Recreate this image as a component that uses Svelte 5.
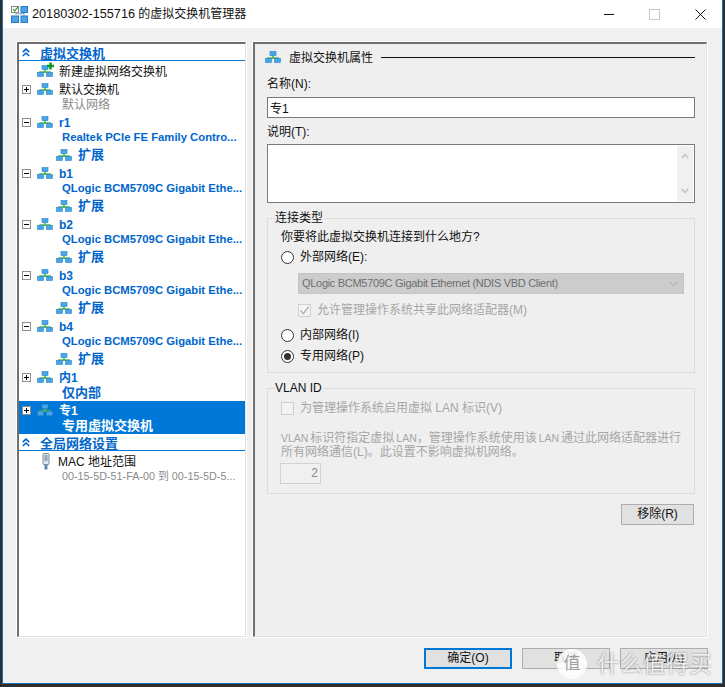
<script>
	const adapters = [
		{ name: 'r1', nic: 'Realtek PCIe FE Family Contro...' },
		{ name: 'b1', nic: 'QLogic BCM5709C Gigabit Ethe...' },
		{ name: 'b2', nic: 'QLogic BCM5709C Gigabit Ethe...' },
		{ name: 'b3', nic: 'QLogic BCM5709C Gigabit Ethe...' },
		{ name: 'b4', nic: 'QLogic BCM5709C Gigabit Ethe...' }
	];
</script>

{#snippet net(plus = false)}
	<svg class="net" width="16" height="12" viewBox="0 0 16 12">
		<path d="M8 4v4M3 8.5V7h10v1.5" fill="none" stroke="#4db84d" stroke-width="1.6" />
		<rect x="5" y="0.5" width="6" height="4" fill="#46a6ea" stroke="#2a80c8" stroke-width="0.6" />
		<rect x="0.5" y="7.5" width="6" height="4" fill="#46a6ea" stroke="#2a80c8" stroke-width="0.6" />
		<rect x="9.5" y="7.5" width="6" height="4" fill="#46a6ea" stroke="#2a80c8" stroke-width="0.6" />
		{#if plus}
			<path d="M13.5 -2.5v7M10 1h7" stroke="#0a9a1e" stroke-width="2.4" />
		{/if}
	</svg>
{/snippet}

{#snippet expander(minus = false)}
	<span class="exp">
		<svg width="9" height="9" viewBox="0 0 9 9">
			<rect x="0.5" y="0.5" width="8" height="8" fill="#fff" stroke="#8e8f8f" />
			<path d={minus ? 'M2 4.5h5' : 'M2 4.5h5M4.5 2v5'} stroke="#000" />
		</svg>
	</span>
{/snippet}

{#snippet chevrons()}
	<svg class="chev" width="8" height="9" viewBox="0 0 8 9">
		<path d="M0.8 4.2 4 1.2l3.2 3M0.8 8 4 5l3.2 3" fill="none" stroke="#0066cc" stroke-width="1.6" />
	</svg>
{/snippet}

<div class="desk">
	<div class="window">
		<header class="title">
			<svg width="17" height="17" viewBox="0 0 17 17">
				<rect x="0.5" y="0.5" width="7" height="6" fill="#fff" stroke="#8a8a8a" />
				<path d="M2 3l1.6 2L7 1" fill="none" stroke="#3c9c3c" stroke-width="1.2" />
				<rect x="10" y="0.5" width="6.5" height="6" fill="#4ca3e6" stroke="#2a78c0" />
				<rect x="0.5" y="10" width="7" height="6.5" fill="#4ca3e6" stroke="#2a78c0" />
				<rect x="10" y="10" width="6.5" height="6.5" fill="#4ca3e6" stroke="#2a78c0" />
				<path d="M13 7v3M4 7.8h9" stroke="#7a9ab8" />
			</svg>
			<span class="title-text"><span class="date">20180302-155716</span> 的虚拟交换机管理器</span>
			<div class="controls">
				<span class="min"></span>
				<span class="max"></span>
				<svg width="11" height="11" viewBox="0 0 11 11">
					<path d="M0.5 0.5l10 10M10.5 0.5l-10 10" stroke="#111" />
				</svg>
			</div>
		</header>

		<div class="body">
			<nav class="tree">
				<div class="section">{@render chevrons()}<b>虚拟交换机</b></div>
				<div class="row main"><span class="exp"></span>{@render net(true)}<span>新建虚拟网络交换机</span></div>
				<div class="row main">{@render expander()}{@render net()}<span>默认交换机</span></div>
				<div class="row sub muted">默认网络</div>
				{#each adapters as a}
					<div class="row main blue">{@render expander(true)}{@render net()}<span>{a.name}</span></div>
					<div class="row sub blue nic">{a.nic}</div>
					<div class="row ext blue">{@render net()}<span>扩展</span></div>
				{/each}
				<div class="row main blue">{@render expander()}{@render net()}<span>内1</span></div>
				<div class="row sub blue">仅内部</div>
				<div class="selected">
					<div class="row main">{@render expander()}{@render net()}<span>专1</span></div>
					<div class="row sub">专用虚拟交换机</div>
				</div>
				<div class="section">{@render chevrons()}<b>全局网络设置</b></div>
				<div class="row main mac">
					<svg width="10" height="17" viewBox="0 0 10 17">
						<rect x="2" y="0.5" width="6" height="11" rx="1" fill="#dfe6ec" stroke="#7f8c99" />
						<rect x="3.5" y="2" width="3" height="6" fill="#8fa6ba" />
						<path d="M5 12v4.5" stroke="#5d87ad" stroke-width="3" />
					</svg>
					<span>MAC 地址范围</span>
				</div>
				<div class="row sub muted range">00-15-5D-51-FA-00 到 00-15-5D-5...</div>
			</nav>

			<main class="props">
				<div class="props-head">
					{@render net()}
					<span>虚拟交换机属性</span>
					<i></i>
				</div>
				<div class="label first">名称(N):</div>
				<input class="name" value="专1" />
				<div class="label second">说明(T):</div>
				<div class="desc">
					<div class="scroll">
						<svg width="8" height="6" viewBox="0 0 8 6"><path d="M0.8 5 4 1.5 7.2 5" fill="none" stroke="#c4c4c4" stroke-width="1.6" /></svg>
						<svg width="8" height="6" viewBox="0 0 8 6"><path d="M0.8 1 4 4.5 7.2 1" fill="none" stroke="#c4c4c4" stroke-width="1.6" /></svg>
					</div>
				</div>

				<fieldset class="group conn">
					<legend>连接类型</legend>
					<div class="question">你要将此虚拟交换机连接到什么地方?</div>
					<div class="opt ext-net"><span class="radio"></span>外部网络(E):</div>
					<div class="select">
						<span>QLogic BCM5709C Gigabit Ethernet (NDIS VBD Client)</span>
						<svg width="9" height="6" viewBox="0 0 9 6"><path d="M0.5 0.8 4.5 4.8l4-4" fill="none" stroke="#a8a8a8" /></svg>
					</div>
					<div class="opt share disabled">
						<span class="check">
							<svg width="11" height="11" viewBox="0 0 11 11"><path d="M1.5 5.5 4.3 8.6 9.6 1.8" fill="none" stroke="#b0b0b0" stroke-width="1.4" /></svg>
						</span>
						允许管理操作系统共享此网络适配器(M)
					</div>
					<div class="opt int-net"><span class="radio"></span>内部网络(I)</div>
					<div class="opt priv-net"><span class="radio on"></span>专用网络(P)</div>
				</fieldset>

				<fieldset class="group vlan">
					<legend>VLAN ID</legend>
					<div class="opt vlan-check disabled"><span class="check"></span>为管理操作系统启用虚拟 LAN 标识(V)</div>
					<p><span class="lat">VLAN</span> 标识符指定虚拟 <span class="lat">LAN</span>，管理操作系统使用该 <span class="lat">LAN</span> 通过此网络适配器进行<br />所有网络通信(L)。此设置不影响虚拟机网络。</p>
					<div class="vlan-id">2</div>
				</fieldset>

				<div class="remove-row"><button class="btn remove">移除(R)</button></div>
			</main>
		</div>

		<footer class="actions">
			<button class="btn primary">确定(O)</button>
			<button class="btn">取消</button>
			<button class="btn">应用(A)</button>
		</footer>

		<div class="watermark">
			<span class="logo">值</span>
			<span class="brand">什么值得买</span>
		</div>
	</div>
</div>

<style>
	:global(body) {
		margin: 0;
		background: #2b2b2b;
	}

	.desk {
		width: 725px;
		height: 687px;
		box-sizing: border-box;
		padding: 0 2px 3px;
		background: #2e2e2e;
		font: 12px/15px "Liberation Sans", "Noto Sans CJK SC", sans-serif;
		color: #111;
		overflow: hidden;
	}

	.window {
		position: relative;
		height: 100%;
		box-sizing: border-box;
		border: 1px solid #1a6fb5;
		border-top: 0;
		background: #f0f0f0;
		display: flex;
		flex-direction: column;
	}

	.title {
		height: 28px;
		background: #fff;
		display: flex;
		align-items: center;
		padding-left: 8px;
		flex: none;
	}

	.title-text {
		margin-left: 4px;
		font-size: 12px;
	}

	.date {
		font-size: 12.7px;
	}

	.controls {
		margin-left: auto;
		display: flex;
		align-items: center;
		gap: 35px;
		padding-right: 16px;
	}

	.min {
		width: 10px;
		height: 1px;
		background: #111;
	}

	.max {
		width: 9px;
		height: 9px;
		border: 1px solid #c8c8c8;
	}

	.body {
		display: flex;
		gap: 7px;
		padding: 14px 14px 0;
		height: 595px;
		flex: none;
	}

	.tree,
	.props {
		box-sizing: border-box;
		border-style: solid;
		border-width: 2px 1px 1px 2px;
		border-color: #6f6f6f #e2e2e2 #e2e2e2 #6f6f6f;
		outline: 1px solid #fff;
		outline-offset: 0;
	}

	.tree {
		width: 229px;
		background: #fff;
		overflow: hidden;
		font-size: 12px;
	}

	.section {
		height: 16px;
		margin-bottom: 1px;
		border-bottom: 1px solid #0078d7;
		display: flex;
		align-items: center;
		padding-left: 3px;
		color: #0066cc;
	}

	.section b {
		margin-left: 10px;
		padding-top: 2px;
		font-size: 13px;
		font-weight: 700;
	}

	.chev {
		flex: none;
	}

	.row {
		white-space: nowrap;
		overflow: hidden;
	}

	.main {
		height: 18px;
		display: flex;
		align-items: center;
		padding-left: 3px;
	}

	.exp {
		width: 15px;
		height: 9px;
		flex: none;
		display: block;
		line-height: 0;
	}

	.net {
		flex: none;
		overflow: visible;
	}

	.main span:last-child {
		margin-left: 6px;
		padding-top: 2px;
	}

	.sub {
		height: 15px;
		padding-left: 43px;
		line-height: 13px;
		font-size: 13px;
	}

	.muted {
		color: #8a8a8a;
		font-size: 12px;
		line-height: 15px;
	}

	.nic {
		font-size: 11.3px;
		line-height: 11px;
		padding-top: 1px;
		height: 14px;
	}

	.range {
		font-size: 10.8px;
		line-height: 13px;
	}

	.ext {
		height: 18px;
		display: flex;
		align-items: center;
		padding-left: 37px;
	}

	.ext span {
		margin-left: 6px;
		padding-bottom: 2px;
		font-size: 13px;
	}

	.blue {
		color: #0066cc;
		font-weight: 700;
	}

	.selected {
		background: #0078d7;
		color: #fff;
		font-weight: 700;
	}

	.mac svg {
		margin-left: 19px;
		flex: none;
	}

	.mac span:last-child {
		margin-left: 7px;
	}

	.props {
		width: 454px;
		background: #efefef;
		padding: 6px 11px 0 12px;
		display: flex;
		flex-direction: column;
	}

	.props-head {
		height: 14px;
		display: flex;
		align-items: center;
		margin-left: -2px;
	}

	.props-head span {
		margin-left: 8px;
		padding-top: 2px;
	}

	.props-head i {
		flex: 1;
		height: 1px;
		background: #111;
		margin-left: 8px;
	}

	.label {
		height: 15px;
	}

	.first {
		margin-top: 13px;
	}

	.second {
		margin-top: 7px;
	}

	.name {
		display: block;
		box-sizing: border-box;
		width: 428px;
		height: 21px;
		margin: 5px 0 0;
		padding: 0 2px;
		border: 1px solid #7a7a7a;
		border-radius: 0;
		background: #fff;
		font: inherit;
		color: #111;
		outline: none;
	}

	.desc {
		box-sizing: border-box;
		width: 428px;
		height: 59px;
		margin-top: 4px;
		border: 1px solid #7a7a7a;
		background: #fff;
		display: flex;
		justify-content: flex-end;
		padding: 1px;
	}

	.scroll {
		width: 16px;
		background: #f0f0f0;
		display: flex;
		flex-direction: column;
		justify-content: space-between;
		align-items: center;
		padding: 7px 0;
		box-sizing: border-box;
	}

	.group {
		box-sizing: border-box;
		width: 428px;
		margin: 0;
		padding: 0 13px;
		border: 1px solid #dcdcdc;
		min-width: 0;
	}

	.group legend {
		padding: 0 2px 0 0;
		margin-left: -6px;
		line-height: 15px;
	}

	.conn {
		height: 162px;
		margin-top: 8px;
	}

	.question {
		margin-top: 4px;
	}

	.opt {
		display: flex;
		align-items: center;
		height: 15px;
	}

	.disabled {
		color: #a6a6a6;
	}

	.radio {
		width: 11px;
		height: 11px;
		border: 1px solid #333;
		border-radius: 50%;
		background: #fff;
		margin-right: 6px;
		position: relative;
		flex: none;
	}

	.radio.on::after {
		content: "";
		position: absolute;
		inset: 2px;
		border-radius: 50%;
		background: #333;
	}

	.check {
		box-sizing: border-box;
		width: 13px;
		height: 13px;
		border: 1px solid #cfcfcf;
		background: #f4f4f4;
		margin-right: 6px;
		flex: none;
		line-height: 0;
	}

	.ext-net {
		margin-top: 5px;
	}

	.select {
		box-sizing: border-box;
		width: 386px;
		height: 21px;
		margin: 8px 0 0 17px;
		padding: 0 5px 0 3px;
		background: #cccccc;
		border: 1px solid #c4c4c4;
		color: #6e6e6e;
		font-size: 11px;
		letter-spacing: -0.3px;
		display: flex;
		align-items: center;
		justify-content: space-between;
	}

	.share {
		margin: 9px 0 0 17px;
	}

	.int-net {
		margin-top: 10px;
	}

	.priv-net {
		margin-top: 6px;
	}

	.vlan {
		height: 113px;
		margin-top: 8px;
	}

	.vlan legend {
		color: #111;
	}

	.vlan-check {
		margin-top: 5px;
	}

	.vlan p {
		margin: 15px 0 0;
		line-height: 14px;
		color: #a6a6a6;
		white-space: nowrap;
		word-spacing: -1.4px;
	}

	.lat {
		font-size: 10.5px;
	}

	.vlan-id {
		box-sizing: border-box;
		width: 41px;
		height: 21px;
		margin: 4px 0 0 -1px;
		border: 1px solid #d2d2d2;
		background: #f0f0f0;
		text-align: right;
		padding-right: 2px;
		line-height: 19px;
		color: #8a8a8a;
	}

	.remove-row {
		display: flex;
		justify-content: flex-end;
		margin-top: 10px;
		padding-right: 1px;
	}

	.btn {
		box-sizing: border-box;
		width: 88px;
		height: 21px;
		padding: 0;
		border: 1px solid #adadad;
		border-radius: 0;
		background: #e1e1e1;
		font: inherit;
		color: #111;
	}

	.remove {
		width: 73px;
	}

	.primary {
		border: 2px solid #0078d7;
	}

	.actions {
		display: flex;
		justify-content: flex-end;
		gap: 10px;
		padding: 11px 14px 0 0;
	}

	.watermark {
		position: absolute;
		left: 554px;
		top: 649px;
		display: flex;
		align-items: center;
		gap: 10px;
		pointer-events: none;
	}

	.logo {
		width: 30px;
		height: 30px;
		border-radius: 50%;
		background: rgba(255, 255, 255, 0.85);
		color: rgba(120, 120, 120, 0.7);
		font-size: 17px;
		line-height: 30px;
		text-align: center;
	}

	.brand {
		font-size: 23px;
		line-height: 26px;
		color: rgba(255, 255, 255, 0.85);
		text-shadow: 0 0 2px rgba(80, 80, 80, 0.75);
	}
</style>
